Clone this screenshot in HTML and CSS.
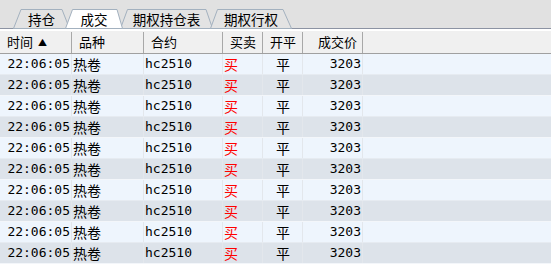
FILE: index.html
```html
<!DOCTYPE html>
<html lang="zh-CN">
<head>
  <meta charset="UTF-8">
  <title>成交</title>
  <link rel="stylesheet" href="styles.css">
</head>
<body>
  <!-- Tab strip -->
  <div class="tabs">
    <div class="tab tab-pos">
      <svg class="tab-shape" viewBox="0 0 57 19" preserveAspectRatio="none"><polygon points="0.5,19.5 8,0.5 49,0.5 56.5,19.5"/></svg>
      <span>持仓</span>
    </div>
    <div class="tab tab-deal active">
      <svg class="tab-shape" viewBox="0 0 58 19" preserveAspectRatio="none"><polygon points="0.5,19.5 7.5,0.5 52,0.5 57.5,19.5"/></svg>
      <span>成交</span>
    </div>
    <div class="tab tab-opt">
      <svg class="tab-shape" viewBox="0 0 93 19" preserveAspectRatio="none"><polygon points="0.5,19.5 7.5,0.5 86,0.5 92.5,19.5"/></svg>
      <span>期权持仓表</span>
    </div>
    <div class="tab tab-exe">
      <svg class="tab-shape" viewBox="0 0 82 19" preserveAspectRatio="none"><polygon points="0.5,19.5 7.5,0.5 73,0.5 81.5,19.5"/></svg>
      <span>期权行权</span>
    </div>
  </div>

  <!-- Trade grid -->
  <div class="grid">
    <div class="head">
      <div class="hc">时间 <span class="sort">▲</span></div>
      <div class="hc">品种</div>
      <div class="hc">合约</div>
      <div class="hc">买卖</div>
      <div class="hc">开平</div>
      <div class="hc hc-right">成交价</div>
      <div class="hc hc-fill"></div>
    </div>
    <div id="rows"></div>
  </div>

  <script>
    // fill the rows (all the same trade)
    const trades = [];
    for (let i = 0; i < 10; i++) {
      trades.push({ time: '22:06:05', name: '热卷', code: 'hc2510', side: '买', oc: '平', price: 3203 });
    }

    const rows = document.getElementById('rows');
    trades.forEach((t, i) => {
      const row = document.createElement('div');
      row.className = 'row' + (i % 2 ? ' alt' : '');
      row.innerHTML = `
        <div class="c c-time">${t.time}</div>
        <div class="c c-cjk">${t.name}</div>
        <div class="c">${t.code}</div>
        <div class="c c-cjk c-buy">${t.side}</div>
        <div class="c c-cjk c-mid">${t.oc}</div>
        <div class="c c-num">${t.price}</div>
        <div class="c c-fill"></div>
      `;
      rows.appendChild(row);
    });
  </script>
</body>
</html>
```

FILE: styles.css
```css
/* Global */
body {
  margin: 0;
  padding: 0;
  background-color: #e1e1e1;
  font-family: "Noto Sans CJK SC", sans-serif;
  color: #000;
  overflow: hidden;
}

/* Tab strip */
.tabs {
  display: flex;
  align-items: flex-end;
  height: 29px;
  padding-left: 13px;
  border-bottom: 1px solid #8c93a3;
  box-sizing: border-box;
}

.tab {
  position: relative;
  height: 19px;
  display: flex;
  justify-content: center;
  align-items: center;
  font-size: 13.5px;
  line-height: 19px;
}

.tab span {
  position: relative;
  padding-top: 1px;
}

.tab-shape {
  position: absolute;
  left: 0;
  top: 0;
  width: 100%;
  height: 100%;
  overflow: visible;
}

.tab-shape polygon {
  fill: #e3e3e3;
  stroke: #a3b1bf;
  stroke-width: 1;
  vector-effect: non-scaling-stroke;
}

.tab.active {
  z-index: 2;
}

.tab.active .tab-shape polygon {
  fill: #ffffff;
}

.tab-pos { width: 57px; }
.tab-deal { width: 58px; margin-left: -5px; }
.tab-opt { width: 93px; margin-left: -3px; }
.tab-exe { width: 82px; margin-left: -3px; }

/* Grid */
.grid {
  background-color: #eef5fd;
}

.head,
.row {
  display: grid;
  grid-template-columns: 72px 72px 79px 40px 40px 60px 1fr;
}

.head {
  background-color: #f0f0f0;
  border-top: 2px solid #ffffff;
  border-bottom: 1px solid #a0a0a0;
  height: 25px;
  box-sizing: border-box;
}

.hc {
  font-size: 13px;
  line-height: 20px;
  padding-left: 7px;
  border-right: 1px solid #a8a8a8;
  margin: 1px 0;
  white-space: nowrap;
}

.hc-right {
  text-align: right;
  padding-right: 5px;
  padding-left: 0;
}

.hc-fill {
  border-right: none;
}

.sort {
  font-size: 9px;
  vertical-align: 1px;
  margin-left: 2px;
}

/* Data rows */
.row {
  height: 21px;
  background-color: #eef5fd;
  border-bottom: 1px solid #e6ebf1;
  box-sizing: border-box;
}

.row.alt {
  background-color: #dde3ea;
  border-bottom-color: #f3f6fa;
}

.c {
  font-family: "DejaVu Sans Mono", "Noto Sans CJK SC", monospace;
  font-size: 13px;
  line-height: 20px;
  padding-left: 1px;
  border-right: 1px solid #e3e7ec;
  white-space: nowrap;
  overflow: hidden;
}

.c-cjk {
  font-family: "Noto Sans CJK SC", sans-serif;
  font-size: 14px;
}

.c-time {
  text-align: right;
  padding-right: 1px;
  padding-left: 0;
}

.c-buy {
  color: #ff0000;
}

.c-mid {
  text-align: center;
}

.c-num {
  text-align: right;
  padding-right: 1px;
}

.c-fill {
  border-right: none;
}
```
